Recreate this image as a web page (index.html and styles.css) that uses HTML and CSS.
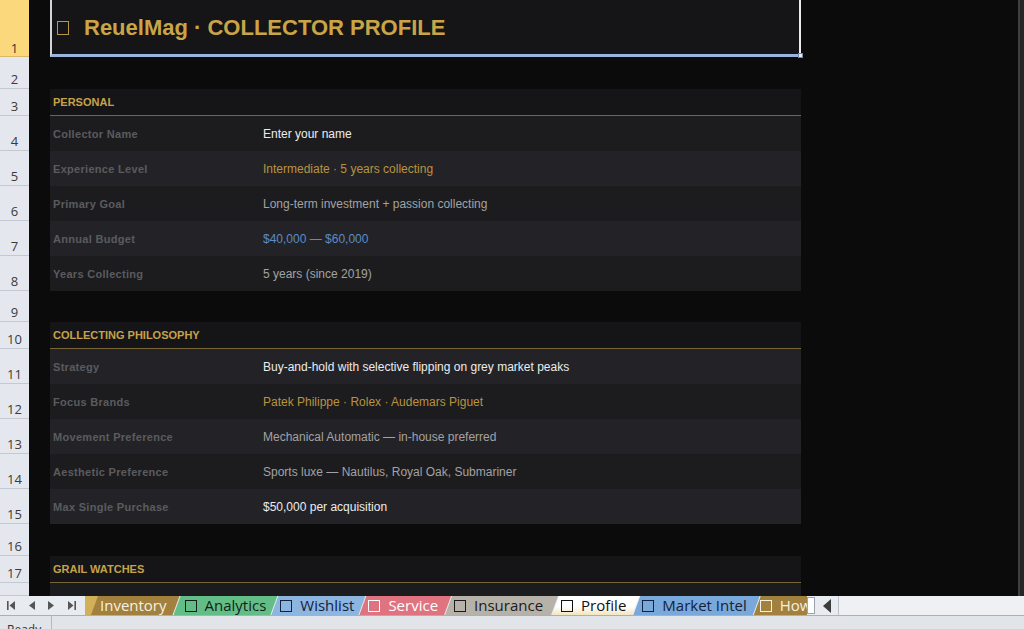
FILE: index.html
```html
<!DOCTYPE html>
<html>
<head>
<meta charset="utf-8">
<title>ReuelMag · Collector Profile</title>
<link rel="stylesheet" href="styles.css">
</head>
<body>
<div class="app">
  <div class="sheet">
    <div class="grid">
      <div class="row h57"><div class="rh sel">1</div><div class="a"></div><div class="title"><span class="tofu"></span>ReuelMag · COLLECTOR PROFILE<span class="handle"></span></div><div class="rest"></div></div>
      <div class="row h32"><div class="rh">2</div><div class="blank"></div></div>
      <div class="row h27"><div class="rh">3</div><div class="a"></div><div class="head">PERSONAL</div><div class="rest"></div></div>
      <div class="row h35 even"><div class="rh">4</div><div class="a"></div><div class="lbl">Collector Name</div><div class="val white">Enter your name</div><div class="rest"></div></div>
      <div class="row h35 odd"><div class="rh">5</div><div class="a"></div><div class="lbl">Experience Level</div><div class="val gold">Intermediate · 5 years collecting</div><div class="rest"></div></div>
      <div class="row h35 even"><div class="rh">6</div><div class="a"></div><div class="lbl">Primary Goal</div><div class="val gray">Long-term investment + passion collecting</div><div class="rest"></div></div>
      <div class="row h35 odd"><div class="rh">7</div><div class="a"></div><div class="lbl">Annual Budget</div><div class="val blue">$40,000 — $60,000</div><div class="rest"></div></div>
      <div class="row h35 even"><div class="rh">8</div><div class="a"></div><div class="lbl">Years Collecting</div><div class="val gray">5 years (since 2019)</div><div class="rest"></div></div>
      <div class="row h31"><div class="rh">9</div><div class="blank"></div></div>
      <div class="row h27"><div class="rh">10</div><div class="a"></div><div class="head">COLLECTING PHILOSOPHY</div><div class="rest"></div></div>
      <div class="row h35 odd"><div class="rh">11</div><div class="a"></div><div class="lbl">Strategy</div><div class="val white">Buy-and-hold with selective flipping on grey market peaks</div><div class="rest"></div></div>
      <div class="row h35 even"><div class="rh">12</div><div class="a"></div><div class="lbl">Focus Brands</div><div class="val gold">Patek Philippe · Rolex · Audemars Piguet</div><div class="rest"></div></div>
      <div class="row h35 odd"><div class="rh">13</div><div class="a"></div><div class="lbl">Movement Preference</div><div class="val gray">Mechanical Automatic — in-house preferred</div><div class="rest"></div></div>
      <div class="row h35 even"><div class="rh">14</div><div class="a"></div><div class="lbl">Aesthetic Preference</div><div class="val gray">Sports luxe — Nautilus, Royal Oak, Submariner</div><div class="rest"></div></div>
      <div class="row h35 odd"><div class="rh">15</div><div class="a"></div><div class="lbl">Max Single Purchase</div><div class="val white">$50,000 per acquisition</div><div class="rest"></div></div>
      <div class="row h32"><div class="rh">16</div><div class="blank"></div></div>
      <div class="row h27"><div class="rh">17</div><div class="a"></div><div class="head">GRAIL WATCHES</div><div class="rest"></div></div>
      <div class="row hlast even"><div class="rh"></div><div class="a"></div><div class="lbl"></div><div class="val"></div><div class="rest"></div></div>
    </div>
    <div class="edge"></div>
  </div>

  <div class="tabbar">
    <div class="nav">
      <svg class="n1" width="8" height="9" viewBox="0 0 8 9"><rect x="0" y="0" width="1.6" height="9" fill="#555"/><polygon points="8,0 8,9 2.5,4.5" fill="#555"/></svg>
      <svg class="n2" width="6" height="9" viewBox="0 0 6 9"><polygon points="6,0 6,9 0,4.5" fill="#555"/></svg>
      <svg class="n3" width="6" height="9" viewBox="0 0 6 9"><polygon points="0,0 0,9 6,4.5" fill="#555"/></svg>
      <svg class="n4" width="8" height="9" viewBox="0 0 8 9"><polygon points="0,0 0,9 5.5,4.5" fill="#555"/><rect x="6.4" y="0" width="1.6" height="9" fill="#555"/></svg>
    </div>
    <div class="tabs">
      <div class="lead"></div>
      <div class="tab t-inv"><span>Inventory</span></div>
      <div class="tab t-ana"><i class="box"></i><span>Analytics</span></div>
      <div class="tab t-wish"><i class="box"></i><span>Wishlist</span></div>
      <div class="tab t-serv"><i class="box"></i><span>Service</span></div>
      <div class="tab t-ins"><i class="box"></i><span>Insurance</span></div>
      <div class="tab t-prof"><i class="box"></i><span>Profile</span></div>
      <div class="tab t-mkt"><i class="box"></i><span>Market Intel</span></div>
      <div class="tab t-hov"><i class="box"></i><span>How to Use</span></div>
    </div>
    <div class="split"></div>
    <div class="hnav"><svg width="8" height="14" viewBox="0 0 8 14"><polygon points="8,0 8,14 0,7" fill="#3c3c3c"/></svg></div>
    <div class="track"></div>
  </div>

  <div class="status"><div class="ready">Ready</div><div class="sfill"></div></div>
</div>
</body>
</html>
```

FILE: styles.css
```css
* { box-sizing: border-box; margin: 0; padding: 0; }
html, body { width: 1024px; height: 629px; overflow: hidden; background: #0b0b0b; }
body { font-family: "Liberation Sans", Arial, sans-serif; }

.app { display: flex; flex-direction: column; height: 629px; }

.sheet { display: flex; height: 596px; flex: none; }
.grid { width: 1018px; display: flex; flex-direction: column; background: #0b0b0b; overflow: hidden; }
.edge { width: 6px; background: #262626; border-left: 2px solid #3f3f3f; }

.row { display: grid; grid-template-columns: 29px 21px 208px 543px 1fr; flex: none; }
.h57 { height: 57px; }
.h32 { height: 32px; }
.h31 { height: 31px; }
.h27 { height: 27px; }
.h35 { height: 35px; }
.hlast { flex: 1; }

.rh {
  background: #e4e8ee;
  border-bottom: 1px solid #c4c9d1;
  color: #3a3a3a;
  font-family: "Open Sans", "DejaVu Sans", sans-serif;
  font-size: 13px;
  line-height: 1;
  display: flex;
  align-items: flex-end;
  justify-content: center;
  padding-bottom: 2px;
}
.rh.sel { background: #fcd87c; border-bottom-color: #d9b868; color: #333; padding-bottom: 1px; }

.a, .rest, .blank { background: #0b0b0b; }
.blank { grid-column: 2 / -1; }

.title {
  grid-column: 3 / 5;
  position: relative;
  background: #151517;
  border-left: 2px solid #d4d4d4;
  border-right: 2px solid #ebebeb;
  border-bottom: 3px solid #9db2dd;
  display: flex;
  align-items: center;
  padding-left: 5px;
  padding-top: 2px;
  color: #c9a548;
  font-size: 22px;
  font-weight: bold;
  white-space: nowrap;
}
.tofu {
  display: inline-block;
  width: 12px;
  height: 14px;
  border: 1px solid #b89645;
  margin-right: 15px;
  flex: none;
}
.handle {
  position: absolute;
  right: -4px;
  bottom: -4px;
  width: 5px;
  height: 5px;
  background: #e8ecf4;
  border: 1px solid #6f86b8;
}

.head {
  grid-column: 3 / 5;
  background: #151517;
  border-bottom: 1px solid #7a6536;
  color: #c6a24b;
  font-size: 11px;
  font-weight: bold;
  display: flex;
  align-items: center;
  padding-left: 3px;
}

.lbl, .val { display: flex; align-items: center; white-space: nowrap; }
.even .lbl, .even .val { background: #1c1c1f; }
.odd .lbl, .odd .val { background: #232327; }

.lbl {
  padding-left: 3px;
  color: #5b5b5e;
  font-size: 11px;
  font-weight: bold;
  letter-spacing: 0.3px;
}
.val { padding-left: 5px; font-size: 12px; }
.white { color: #ececec; }
.gold { color: #b8933f; }
.gray { color: #a2a2a4; }
.blue { color: #5b8cc4; }

/* sheet tab bar */
.tabbar {
  height: 20px;
  flex: none;
  display: flex;
  background: #e8ebf0;
  border-bottom: 1px solid #aab0b8;
}
.nav { width: 85px; flex: none; display: flex; align-items: center; }
.n1 { margin-left: 7px; }
.n2 { margin-left: 14px; }
.n3 { margin-left: 13px; }
.n4 { margin-left: 14px; }

.tabs { width: 722px; flex: none; display: flex; overflow: hidden; height: 19px; }
.lead { width: 14px; flex: none; background: #d2b05a; }
.tab {
  flex: none;
  display: flex;
  align-items: center;
  height: 19px;
  padding: 0 13px 0 9px;
  margin-left: -6px;
  clip-path: polygon(7px 0, 100% 0, calc(100% - 7px) 100%, 0 100%);
  font-family: "Open Sans", "DejaVu Sans", sans-serif;
  font-size: 15px;
  line-height: 19px;
  white-space: nowrap;
}
.t-inv { margin-left: -8px; padding-left: 9px; }
.t-ana { padding-left: 11px; padding-right: 11px; }
.t-wish { padding-right: 11px; }
.t-ins { padding-right: 15px; }
.t-hov { padding-left: 6px; }
.box {
  display: inline-block;
  width: 12px;
  height: 12px;
  border: 1px solid currentColor;
  margin-right: 8px;
  flex: none;
}
.t-inv { background: #a2803e; color: #f6f0e0; }
.t-ana { background: #63bd87; color: #161e19; }
.t-wish { background: #8cb5e0; color: #14223c; }
.t-serv { background: #e07380; color: #ffffff; }
.t-ins { background: #b7b2a9; color: #1b1b1b; }
.t-prof { background: linear-gradient(#ffffff 55%, #f2e4bf); color: #111111; }
.t-mkt { background: #79a8da; color: #14223c; }
.t-hov { background: #a2803e; color: #f6f0e0; }

.split {
  width: 8px;
  flex: none;
  height: 17px;
  align-self: center;
  background: #ffffff;
  border: 1px solid #9aa2ad;
}
.hnav {
  width: 24px;
  flex: none;
  display: flex;
  align-items: center;
  justify-content: center;
  border-right: 1px solid #bcc1c8;
}
.track { flex: 1; background: #eef0f4; }

.status {
  flex: 1;
  display: flex;
  background: #e1e5ea;
  overflow: hidden;
  font-family: "Open Sans", "DejaVu Sans", sans-serif;
  font-size: 12px;
  color: #333;
}
.ready { width: 52px; padding: 7px 0 0 7px; border-right: 1px solid #b5bac1; line-height: 14px; }
.sfill { flex: 1; }
```
